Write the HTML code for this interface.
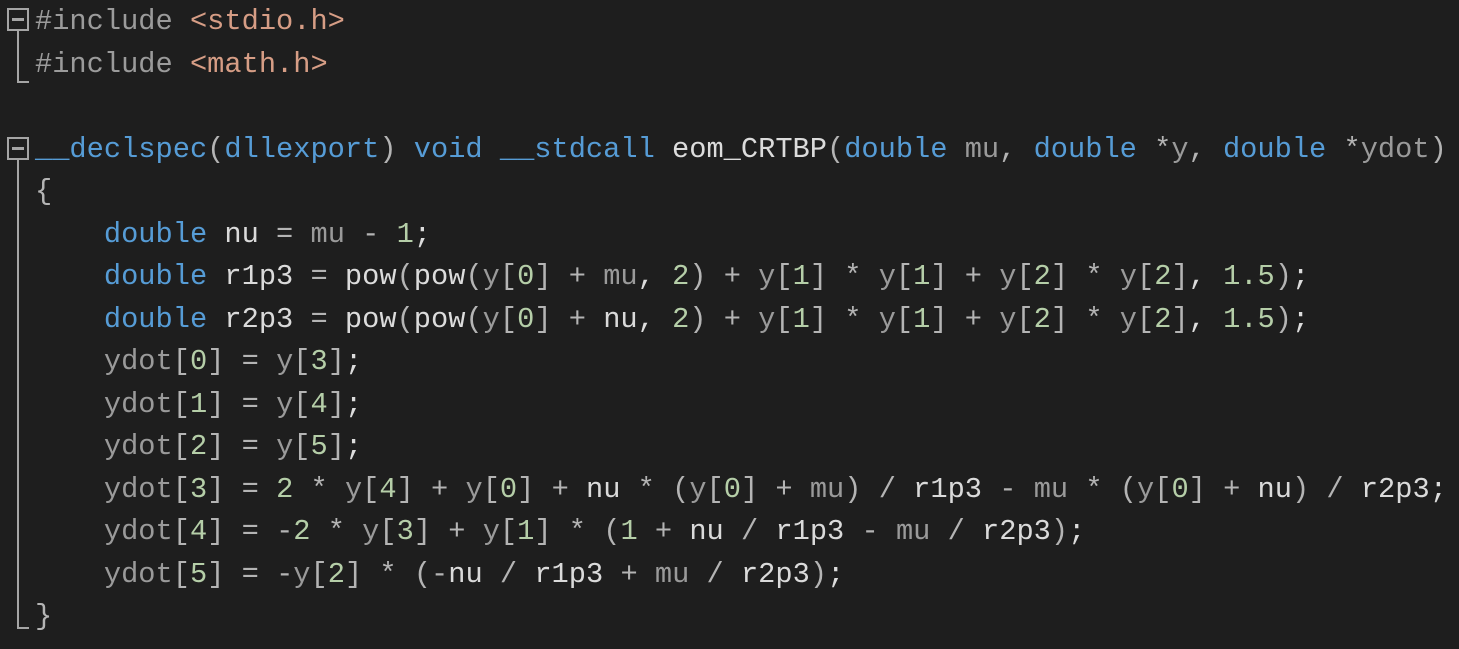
<!DOCTYPE html>
<html><head><meta charset="utf-8"><style>
body{margin:0;background:#1e1e1e;width:1459px;height:649px;overflow:hidden;position:relative}
pre{position:absolute;left:35px;top:1px;margin:0;font-family:"Liberation Mono",monospace;font-size:28.7px;line-height:42.5px;color:#dcdcdc;white-space:pre}
.k{color:#569cd6}.p{color:#9a9a9a}.n{color:#b5cea8}.s{color:#d69d85}.o{color:#b4b4b4}.v{color:#dadada}.pp{color:#9b9b9b}
.box{position:absolute;width:22px;height:23px;border:2px solid #a5a5a5;box-sizing:border-box}
.box:after{content:"";position:absolute;left:3px;right:3px;top:8px;height:3px;background:#a5a5a5}
.ln{position:absolute;background:#a5a5a5}
</style></head><body>
<div class="box" style="left:7px;top:8px"></div>
<div class="ln" style="left:17px;top:31px;width:2px;height:52px"></div>
<div class="ln" style="left:17px;top:81px;width:12px;height:2px"></div>
<div class="box" style="left:7px;top:137px"></div>
<div class="ln" style="left:17px;top:160px;width:2px;height:469px"></div>
<div class="ln" style="left:17px;top:627px;width:12px;height:2px"></div>
<pre><span class="pp">#include</span> <span class="s">&lt;stdio.h&gt;</span>
<span class="pp">#include</span> <span class="s">&lt;math.h&gt;</span>

<span class="k">__declspec</span><span class="o">(</span><span class="k">dllexport</span><span class="o">)</span> <span class="k">void</span> <span class="k">__stdcall</span> eom_CRTBP<span class="o">(</span><span class="k">double</span> <span class="p">mu</span><span class="o">,</span> <span class="k">double</span> <span class="o">*</span><span class="p">y</span><span class="o">,</span> <span class="k">double</span> <span class="o">*</span><span class="p">ydot</span><span class="o">)</span>
<span class="o">{</span>
    <span class="k">double</span> <span class="v">nu</span> <span class="o">=</span> <span class="p">mu</span> <span class="o">-</span> <span class="n">1</span>;
    <span class="k">double</span> <span class="v">r1p3</span> <span class="o">=</span> pow<span class="o">(</span>pow<span class="o">(</span><span class="p">y</span><span class="o">[</span><span class="n">0</span><span class="o">]</span> <span class="o">+</span> <span class="p">mu</span>, <span class="n">2</span><span class="o">)</span> <span class="o">+</span> <span class="p">y</span><span class="o">[</span><span class="n">1</span><span class="o">]</span> <span class="o">*</span> <span class="p">y</span><span class="o">[</span><span class="n">1</span><span class="o">]</span> <span class="o">+</span> <span class="p">y</span><span class="o">[</span><span class="n">2</span><span class="o">]</span> <span class="o">*</span> <span class="p">y</span><span class="o">[</span><span class="n">2</span><span class="o">]</span>, <span class="n">1.5</span><span class="o">)</span>;
    <span class="k">double</span> <span class="v">r2p3</span> <span class="o">=</span> pow<span class="o">(</span>pow<span class="o">(</span><span class="p">y</span><span class="o">[</span><span class="n">0</span><span class="o">]</span> <span class="o">+</span> <span class="v">nu</span>, <span class="n">2</span><span class="o">)</span> <span class="o">+</span> <span class="p">y</span><span class="o">[</span><span class="n">1</span><span class="o">]</span> <span class="o">*</span> <span class="p">y</span><span class="o">[</span><span class="n">1</span><span class="o">]</span> <span class="o">+</span> <span class="p">y</span><span class="o">[</span><span class="n">2</span><span class="o">]</span> <span class="o">*</span> <span class="p">y</span><span class="o">[</span><span class="n">2</span><span class="o">]</span>, <span class="n">1.5</span><span class="o">)</span>;
    <span class="p">ydot</span><span class="o">[</span><span class="n">0</span><span class="o">]</span> <span class="o">=</span> <span class="p">y</span><span class="o">[</span><span class="n">3</span><span class="o">]</span>;
    <span class="p">ydot</span><span class="o">[</span><span class="n">1</span><span class="o">]</span> <span class="o">=</span> <span class="p">y</span><span class="o">[</span><span class="n">4</span><span class="o">]</span>;
    <span class="p">ydot</span><span class="o">[</span><span class="n">2</span><span class="o">]</span> <span class="o">=</span> <span class="p">y</span><span class="o">[</span><span class="n">5</span><span class="o">]</span>;
    <span class="p">ydot</span><span class="o">[</span><span class="n">3</span><span class="o">]</span> <span class="o">=</span> <span class="n">2</span> <span class="o">*</span> <span class="p">y</span><span class="o">[</span><span class="n">4</span><span class="o">]</span> <span class="o">+</span> <span class="p">y</span><span class="o">[</span><span class="n">0</span><span class="o">]</span> <span class="o">+</span> <span class="v">nu</span> <span class="o">*</span> <span class="o">(</span><span class="p">y</span><span class="o">[</span><span class="n">0</span><span class="o">]</span> <span class="o">+</span> <span class="p">mu</span><span class="o">)</span> <span class="o">/</span> <span class="v">r1p3</span> <span class="o">-</span> <span class="p">mu</span> <span class="o">*</span> <span class="o">(</span><span class="p">y</span><span class="o">[</span><span class="n">0</span><span class="o">]</span> <span class="o">+</span> <span class="v">nu</span><span class="o">)</span> <span class="o">/</span> <span class="v">r2p3</span>;
    <span class="p">ydot</span><span class="o">[</span><span class="n">4</span><span class="o">]</span> <span class="o">=</span> <span class="o">-</span><span class="n">2</span> <span class="o">*</span> <span class="p">y</span><span class="o">[</span><span class="n">3</span><span class="o">]</span> <span class="o">+</span> <span class="p">y</span><span class="o">[</span><span class="n">1</span><span class="o">]</span> <span class="o">*</span> <span class="o">(</span><span class="n">1</span> <span class="o">+</span> <span class="v">nu</span> <span class="o">/</span> <span class="v">r1p3</span> <span class="o">-</span> <span class="p">mu</span> <span class="o">/</span> <span class="v">r2p3</span><span class="o">)</span>;
    <span class="p">ydot</span><span class="o">[</span><span class="n">5</span><span class="o">]</span> <span class="o">=</span> <span class="o">-</span><span class="p">y</span><span class="o">[</span><span class="n">2</span><span class="o">]</span> <span class="o">*</span> <span class="o">(-</span><span class="v">nu</span> <span class="o">/</span> <span class="v">r1p3</span> <span class="o">+</span> <span class="p">mu</span> <span class="o">/</span> <span class="v">r2p3</span><span class="o">)</span>;
<span class="o">}</span></pre>
</body></html>
